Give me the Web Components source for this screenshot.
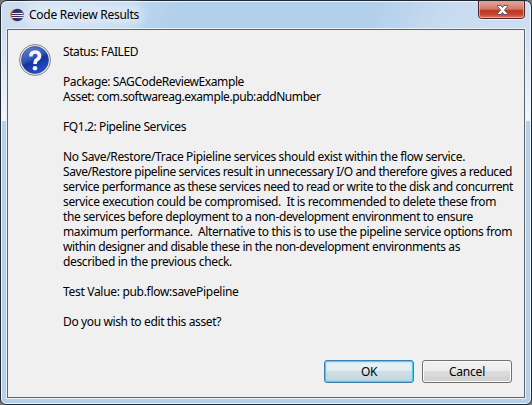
<!DOCTYPE html>
<html lang="en"><head><meta charset="utf-8"><title>Code Review Results</title>
<style>html,body{margin:0;width:532px;height:405px;overflow:hidden;background:#777}</style></head>
<body>
<aero-window>
  <title-bar slot="title"><fit-line w="110">Code Review Results</fit-line></title-bar>
  <question-icon slot="icon"></question-icon>
  <fit-line w="75">Status: FAILED</fit-line>
  <fit-line></fit-line>
  <fit-line w="181">Package: SAGCodeReviewExample</fit-line>
  <fit-line w="257.5">Asset: com.softwareag.example.pub:addNumber</fit-line>
  <fit-line></fit-line>
  <fit-line w="123">FQ1.2: Pipeline Services</fit-line>
  <fit-line></fit-line>
  <fit-line w="402">No Save/Restore/Trace Pipieline services should exist within the flow service.</fit-line>
  <fit-line w="449">Save/Restore pipeline services result in unnecessary I/O and therefore gives a reduced</fit-line>
  <fit-line w="450">service performance as these services need to read or write to the disk and concurrent</fit-line>
  <fit-line w="433">service execution could be compromised.  It is recommended to delete these from</fit-line>
  <fit-line w="410">the services before deployment to a non-development environment to ensure</fit-line>
  <fit-line w="449">maximum performance.  Alternative to this is to use the pipeline service options from</fit-line>
  <fit-line w="397">within designer and disable these in the non-development environments as</fit-line>
  <fit-line w="169">described in the previous check.</fit-line>
  <fit-line></fit-line>
  <fit-line w="175.5">Test Value: pub.flow:savePipeline</fit-line>
  <fit-line></fit-line>
  <fit-line w="158">Do you wish to edit this asset?</fit-line>
  <push-button slot="actions" primary><fit-line w="16">OK</fit-line></push-button>
  <push-button slot="actions"><fit-line w="36">Cancel</fit-line></push-button>
</aero-window>
<script>
const define=(name,html,ready)=>customElements.define(name,class extends HTMLElement{
  constructor(){super();this.attachShadow({mode:'open'}).innerHTML=html;}
  connectedCallback(){if(ready)ready(this);}
});
define('eclipse-icon',`<style>:host{display:block;width:14px;height:14px}svg{display:block}</style>
<svg width="14" height="14" viewBox="0 0 14 14"><circle cx="6.3" cy="7" r="6.2" fill="#f0912c"/><circle cx="7.6" cy="7" r="6.2" fill="#342b63"/><path d="M2 5.500h11M1.600 7.500h12.200M2 9.500h11" stroke="#e9ebf5" stroke-width="1"/></svg>`);
define('close-button',`<style>:host{display:block;width:47px;height:19px}svg{display:block}</style>
<svg width="47" height="19" viewBox="0 0 47 19"><defs><linearGradient id="g" x2="0" y2="1"><stop offset="0" stop-color="#e5a99c"/><stop offset=".48" stop-color="#d27565"/><stop offset=".5" stop-color="#b93a22"/><stop offset=".75" stop-color="#c5402a"/><stop offset="1" stop-color="#e0836a"/></linearGradient></defs>
<path d="M0 0h47v15q0 4-4 4H4q-4 0-4-4z" fill="#f3f8fd" opacity=".8"/><path d="M.5 0v14.500q0 3 3 3h40q3 0 3-3V0z" fill="url(#g)" stroke="#50222a"/><path d="M1.500 .5v14q0 2 2 2h40q2 0 2-2v-14z" fill="none" stroke="#f3c2b6" stroke-opacity=".65"/>
<path d="M19.500 4.500h3.500l1.500 2 1.500-2h3.500v1l-3 3.500 3 3.500v1H26l-1.500-2-1.500 2h-3.500v-1l3-3.500-3-3.500z" fill="#fff" stroke="#5a5264"/></svg>`);
define('title-bar',`<style>:host{display:flex;align-items:flex-start;height:27px;padding-left:4px}eclipse-icon{margin:7px 5px 0 0}.t{padding-top:6px;flex:1}.t ::slotted(*){width:max-content;border-radius:8px;background:rgba(232,241,250,.55);box-shadow:0 0 8px 5px rgba(232,241,250,.55)}close-button{margin-right:1px}</style>
<eclipse-icon></eclipse-icon><div class="t"><slot></slot></div><close-button></close-button>`);
define('question-icon',`<style>:host{display:block;width:32px;height:32px}svg{display:block}</style>
<svg width="32" height="32" viewBox="0 0 32 32"><defs><linearGradient id="b" x1=".2" y1="0" x2=".65" y2="1"><stop offset="0" stop-color="#6384d3"/><stop offset=".45" stop-color="#2e50b7"/><stop offset=".55" stop-color="#1532a0"/><stop offset="1" stop-color="#2451ce"/></linearGradient></defs>
<circle cx="16" cy="16" r="15.500" fill="#e9e9e9" stroke="#858585"/><circle cx="16" cy="16" r="13.500" fill="url(#b)" stroke="#23409a" stroke-width=".7"/>
<path d="M11.800 12.500Q12 8 16 8Q20.500 8 20.500 11.800Q20.500 14.300 18 15.700Q16.100 16.800 16.100 20" fill="none" stroke="#f4f4f4" stroke-width="3.700"/><circle cx="16" cy="24.200" r="2.300" fill="#f4f4f4"/></svg>`);
define('push-button',`<style>:host{box-sizing:border-box;display:flex;justify-content:center;align-items:center;width:90px;height:23px;border:1px solid #707070;border-radius:3px;background:linear-gradient(#f2f2f2,#ebebeb 49%,#dddddd 50%,#cfcfcf);box-shadow:inset 0 0 0 1px #fbfbfb}
:host([primary]){border-color:#3c7fb1;background:linear-gradient(#eaf2f5,#e2ecf0 49%,#cfdfe5 50%,#c3d5dd);box-shadow:inset 0 0 0 1px #48d0f5,inset 0 0 2px 1px #7adcf5}</style><slot></slot>`);
define('aero-window',`<style>:host{box-sizing:border-box;display:flex;flex-direction:column;width:532px;height:405px;border:1px solid #20252e;border-radius:7px 7px 6px 6px;padding:0 5px 5px;font:12px/15px "Noto Sans","Open Sans",sans-serif;color:#000;
background:linear-gradient(#cfdff200,#f1f7fd) 0 28px/100% 92px no-repeat,linear-gradient(110deg,#c9dcf0,#cfe0f3 10%,#b1cfeb 32%,#b1cfeb 65%,#c7dbf0 78%,#d0e0f3) 0 0/100% 120px no-repeat,#b5d0ed;box-shadow:inset 0 0 0 1px #eef6fd}
.client{box-sizing:border-box;flex:1;display:flex;flex-direction:column;border:1px solid #eaf3fb;background:#f0f0f0;box-shadow:inset 0 0 0 1px #59646d;padding:15px 12px 15px}
.body{display:flex;gap:12px;flex:1}.body>div{flex:1}.actions{display:flex;justify-content:flex-end;gap:8px;padding-right:1px}</style>
<slot name="title"></slot><div class="client"><div class="body"><slot name="icon"></slot><div><slot></slot></div></div><div class="actions"><slot name="actions"></slot></div></div>`);
// One line of dialog text, tracked to the width in its "w" attribute. It is defined
// last because it measures itself in the font that aero-window passes down.
define('fit-line',`<style>:host{display:block;height:15px;line-height:15px;white-space:pre}span{display:inline-block}</style><span><slot></slot></span>`,el=>{
  const w=+el.getAttribute('w');if(!w)return;
  const s=el.shadowRoot.querySelector('span');
  s.style.letterSpacing=(w-s.getBoundingClientRect().width)/el.textContent.length+'px';
});
</script></body></html>
